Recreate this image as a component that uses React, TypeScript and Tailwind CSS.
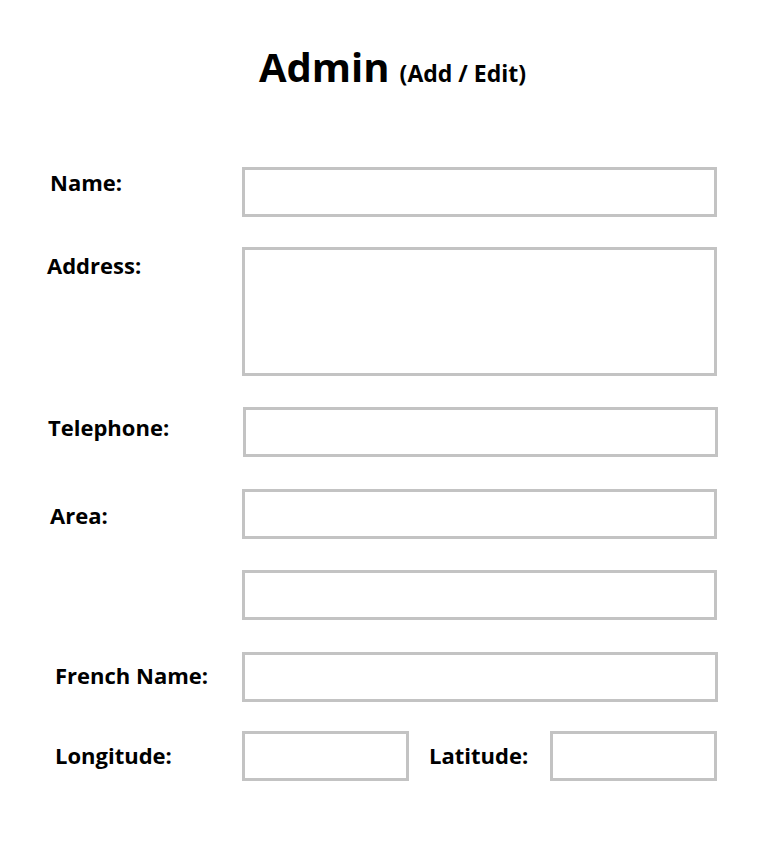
import React from "react";

const box = "h-[50px] border-[3px] border-[#c3c3c3] bg-white";

export default function App() {
  return (
    <div
      className="w-[771px] h-[846px] bg-white text-black font-bold"
      style={{ fontFamily: '"Open Sans", "Liberation Sans", sans-serif' }}
    >
      <div className="pt-[47px] flex justify-center items-baseline pl-[14px]">
        <span className="text-[40px] leading-none">Admin</span>
        <span className="text-[23px] leading-none ml-[10px]">(Add / Edit)</span>
      </div>

      <div className="mt-[80px] flex flex-col">
        <div className="flex">
          <div className="w-[242px] shrink-0 pl-[50px] pt-[4px] text-[22px] leading-none">Name:</div>
          <div className={`w-[475px] ${box}`} />
        </div>

        <div className="flex mt-[30px]">
          <div className="w-[242px] shrink-0 pl-[47px] pt-[7px] text-[22px] leading-none">Address:</div>
          <div className="w-[475px] h-[129px] border-[3px] border-[#c3c3c3]" />
        </div>

        <div className="flex mt-[31px]">
          <div className="w-[243px] shrink-0 pl-[48px] pt-[9px] text-[22px] leading-none">Telephone:</div>
          <div className={`w-[475px] ${box}`} />
        </div>

        <div className="flex mt-[32px]">
          <div className="w-[242px] shrink-0 pl-[50px] pt-[15px] text-[22px] leading-none">Area:</div>
          <div className={`w-[475px] ${box}`} />
        </div>

        <div className="flex mt-[31px]">
          <div className="w-[242px] shrink-0" />
          <div className={`w-[475px] ${box}`} />
        </div>

        <div className="flex mt-[32px]">
          <div className="w-[242px] shrink-0 pl-[55px] pt-[12px] text-[22px] leading-none">French Name:</div>
          <div className={`w-[476px] ${box}`} />
        </div>

        <div className="flex mt-[29px]">
          <div className="w-[242px] shrink-0 pl-[55px] pt-[13px] text-[22px] leading-none">Longitude:</div>
          <div className={`w-[167px] ${box}`} />
          <div className="w-[141px] shrink-0 pl-[20px] pt-[13px] text-[22px] leading-none">Latitude:</div>
          <div className={`w-[167px] ${box}`} />
        </div>
      </div>
    </div>
  );
}
